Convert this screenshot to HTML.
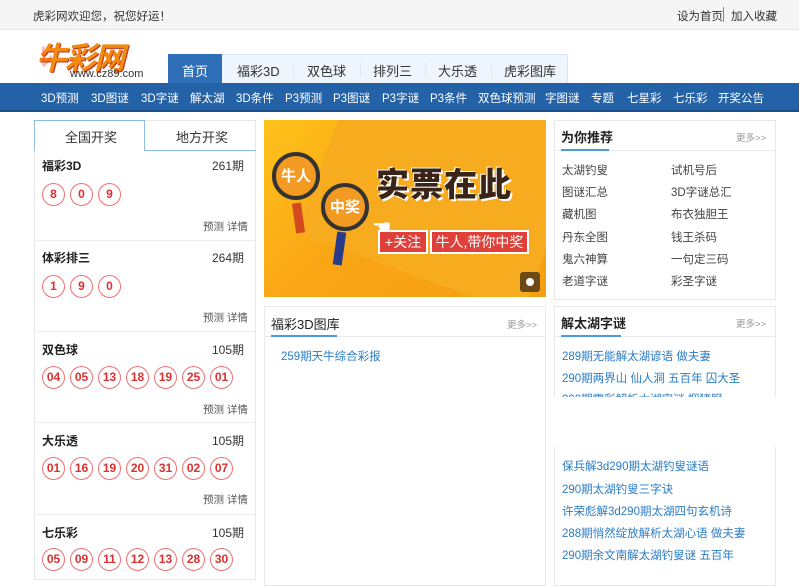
<!DOCTYPE html>
<html><head><meta charset="utf-8"><style>
*{margin:0;padding:0;box-sizing:border-box}
body{width:799px;height:569px;overflow:hidden;background:#fff;font-family:"Liberation Sans","Noto Sans CJK SC",sans-serif;font-size:12px;color:#333;position:relative}
.a{position:absolute;white-space:nowrap}
.top{position:absolute;left:0;top:0;width:799px;height:30px;background:#f5f5f5;border-bottom:1px solid #e6e6e6}
.nav{position:absolute;left:0;top:83px;width:799px;height:29px;background:#2462a8;border-bottom:2px solid #1a4f8c}
.nav span{position:absolute;top:7px;color:#fff;font-size:11.5px}
.tabs{position:absolute;left:168px;top:54px;width:400px;height:29px;background:#eef5fc;border:1px solid #d6e6f6;border-bottom:none}
.tabs span{position:absolute;top:6px;font-size:13px;color:#333}
.tabs i{position:absolute;top:8px;width:1px;height:14px;background:#dde6ee}
.box{position:absolute;border:1px solid #e8e8e8;background:#fff}
.ball{position:absolute;width:23px;height:23px;border:1.5px solid #f07070;border-radius:50%;color:#d93030;font-weight:bold;font-size:12px;text-align:center;line-height:20px}
.ttl{font-weight:bold;font-size:12px;color:#222}
.sm{font-size:10.5px;color:#555}
.lnk{color:#2a7cc6;font-size:11.5px}
.it{color:#444;font-size:11.5px}
.sep{position:absolute;left:34px;width:222px;height:1px;background:#ececec}
</style></head><body>
<div class="top"></div>
<div class="a" style="left:33px;top:8px;font-size:11.5px;color:#333">虎彩网欢迎您，祝您好运！</div>
<div class="a" style="left:677px;top:8px;font-size:11.5px;color:#333">设为首页</div>
<div class="a" style="left:723px;top:7px;width:1px;height:15px;background:#888"></div>
<div class="a" style="left:731px;top:8px;font-size:11.5px;color:#333">加入收藏</div>

<!-- logo -->
<div class="a" style="left:36px;top:33px;font-size:31px;font-weight:bold;font-style:italic;color:#f08a10;letter-spacing:-2px;text-shadow:1px 1px 0 #c03020">牛彩网</div>
<div class="a" style="left:40px;top:37px;font-size:26px;font-weight:bold;color:#e8452a;opacity:.35">ﾚ</div>
<div class="a" style="left:70px;top:68px;font-size:11px;color:#333">www.cz89.com</div>

<div class="tabs">
<div class="a" style="left:-1px;top:-1px;width:54px;height:30px;background:#2f6fb8"></div>
<span style="left:13px;color:#fff">首页</span>
<span style="left:68px">福彩3D</span><i style="left:124px"></i>
<span style="left:138px">双色球</span><i style="left:191px"></i>
<span style="left:204px">排列三</span><i style="left:256px"></i>
<span style="left:269px">大乐透</span><i style="left:322px"></i>
<span style="left:335px">虎彩图库</span>
</div>

<div class="nav">
<span style="left:41px">3D预测</span><span style="left:91px">3D图谜</span><span style="left:141px">3D字谜</span><span style="left:190px">解太湖</span><span style="left:236px">3D条件</span><span style="left:285px">P3预测</span><span style="left:333px">P3图谜</span><span style="left:382px">P3字谜</span><span style="left:430px">P3条件</span><span style="left:478px">双色球预测</span><span style="left:545px">字图谜</span><span style="left:591px">专题</span><span style="left:627px">七星彩</span><span style="left:673px">七乐彩</span><span style="left:718px">开奖公告</span>
</div>

<!-- left column -->
<div class="box" style="left:34px;top:120px;width:222px;height:460px"></div>
<div class="a" style="left:34px;top:120px;width:111px;height:31px;border:1px solid #8dbbe6;border-bottom:none;background:#fff"></div>
<div class="a" style="left:145px;top:150px;width:111px;height:1px;background:#8dbbe6"></div>
<div class="a" style="left:145px;top:120px;width:111px;height:30px;border-top:1px solid #e8e8e8"></div>
<div class="a" style="left:65px;top:127px;font-size:13px">全国开奖</div>
<div class="a" style="left:176px;top:127px;font-size:13px">地方开奖</div>

<div class="a ttl" style="left:42px;top:157px">福彩3D</div><div class="a" style="left:212px;top:157px">261期</div>
<div class="ball" style="left:42px;top:183px">8</div><div class="ball" style="left:70px;top:183px">0</div><div class="ball" style="left:98px;top:183px">9</div>
<div class="a sm" style="left:203px;top:219px">预测 详情</div>
<div class="sep" style="top:240px"></div>

<div class="a ttl" style="left:42px;top:249px">体彩排三</div><div class="a" style="left:212px;top:249px">264期</div>
<div class="ball" style="left:42px;top:275px">1</div><div class="ball" style="left:70px;top:275px">9</div><div class="ball" style="left:98px;top:275px">0</div>
<div class="a sm" style="left:203px;top:310px">预测 详情</div>
<div class="sep" style="top:331px"></div>

<div class="a ttl" style="left:42px;top:341px">双色球</div><div class="a" style="left:212px;top:341px">105期</div>
<div class="ball" style="left:42px;top:366px">04</div><div class="ball" style="left:70px;top:366px">05</div><div class="ball" style="left:98px;top:366px">13</div><div class="ball" style="left:126px;top:366px">18</div><div class="ball" style="left:154px;top:366px">19</div><div class="ball" style="left:182px;top:366px">25</div><div class="ball" style="left:210px;top:366px">01</div>
<div class="a sm" style="left:203px;top:402px">预测 详情</div>
<div class="sep" style="top:422px"></div>

<div class="a ttl" style="left:42px;top:432px">大乐透</div><div class="a" style="left:212px;top:432px">105期</div>
<div class="ball" style="left:42px;top:457px">01</div><div class="ball" style="left:70px;top:457px">16</div><div class="ball" style="left:98px;top:457px">19</div><div class="ball" style="left:126px;top:457px">20</div><div class="ball" style="left:154px;top:457px">31</div><div class="ball" style="left:182px;top:457px">02</div><div class="ball" style="left:210px;top:457px">07</div>
<div class="a sm" style="left:203px;top:492px">预测 详情</div>
<div class="sep" style="top:514px"></div>

<div class="a ttl" style="left:42px;top:524px">七乐彩</div><div class="a" style="left:212px;top:524px">105期</div>
<div class="ball" style="left:42px;top:548px">05</div><div class="ball" style="left:70px;top:548px">09</div><div class="ball" style="left:98px;top:548px">11</div><div class="ball" style="left:126px;top:548px">12</div><div class="ball" style="left:154px;top:548px">13</div><div class="ball" style="left:182px;top:548px">28</div><div class="ball" style="left:210px;top:548px">30</div>

<!-- banner -->
<div class="a" style="left:264px;top:120px;width:282px;height:177px;background:linear-gradient(135deg,#ffc21a 0%,#f9a515 45%,#f5a012 100%);overflow:hidden">
<div class="a" style="left:60px;top:-40px;width:240px;height:200px;background:#f7ab1e;transform:rotate(20deg)"></div>
<div class="a" style="left:8px;top:32px;width:48px;height:48px;border-radius:50%;border:4px solid #333;background:#f39a22"></div>
<div class="a" style="left:17px;top:45px;color:#fff;font-weight:bold;font-size:15px">牛人</div>
<div class="a" style="left:30px;top:83px;width:9px;height:30px;background:#d34a20;transform:rotate(-8deg)"></div>
<div class="a" style="left:57px;top:63px;width:48px;height:48px;border-radius:50%;border:4px solid #333;background:#f39a22"></div>
<div class="a" style="left:66px;top:76px;color:#fff;font-weight:bold;font-size:15px">中奖</div>
<div class="a" style="left:71px;top:112px;width:9px;height:33px;background:#2a3a8a;transform:rotate(8deg)"></div>
<div class="a" style="left:108px;top:95px;font-size:22px;color:#fff">☚</div>
<div class="a" style="left:112px;top:38px;font-size:33px;font-weight:900;color:#3a2418;letter-spacing:1px;text-shadow:2px 2px 0 #fff,-1px -1px 0 #fff">实票在此</div>
<div class="a" style="left:114px;top:110px;width:50px;height:24px;background:#e0403a;border:2px solid #fff;color:#fff;font-size:14px;line-height:20px;text-align:center">+关注</div>
<div class="a" style="left:166px;top:110px;width:99px;height:24px;background:#e0403a;border:2px solid #fff;color:#fff;font-size:14px;line-height:20px;text-align:center">牛人,带你中奖</div>
<div class="a" style="left:256px;top:152px;width:20px;height:20px;background:#6b4a18;border-radius:3px"></div>
<div class="a" style="left:262px;top:158px;width:8px;height:8px;background:#fff;border-radius:50%"></div>
</div>

<!-- middle box -->
<div class="box" style="left:264px;top:306px;width:282px;height:280px"></div>
<div class="a" style="left:264px;top:336px;width:282px;height:1px;background:#eaeaea"></div>
<div class="a" style="left:271px;top:314px;font-size:13px;color:#222">福彩3D图库</div>
<div class="a" style="left:271px;top:335px;width:66px;height:2px;background:#4a9be0"></div>
<div class="a" style="left:507px;top:317px;font-size:9.5px;color:#999">更多&gt;&gt;</div>
<div class="a lnk" style="left:281px;top:348px">259期天牛综合彩报</div>

<!-- right box 1 -->
<div class="box" style="left:554px;top:120px;width:222px;height:180px"></div>
<div class="a" style="left:554px;top:150px;width:222px;height:1px;background:#eaeaea"></div>
<div class="a" style="left:561px;top:127px;font-size:13px;font-weight:bold;color:#222">为你推荐</div>
<div class="a" style="left:561px;top:149px;width:48px;height:2px;background:#4a9be0"></div>
<div class="a" style="left:736px;top:130px;font-size:9.5px;color:#999">更多&gt;&gt;</div>
<div class="a it" style="left:562px;top:162px">太湖钓叟</div><div class="a it" style="left:671px;top:162px">试机号后</div>
<div class="a it" style="left:562px;top:184px">图谜汇总</div><div class="a it" style="left:671px;top:184px">3D字谜总汇</div>
<div class="a it" style="left:562px;top:206px">藏机图</div><div class="a it" style="left:671px;top:206px">布衣独胆王</div>
<div class="a it" style="left:562px;top:229px">丹东全图</div><div class="a it" style="left:671px;top:229px">钱王杀码</div>
<div class="a it" style="left:562px;top:251px">鬼六神算</div><div class="a it" style="left:671px;top:251px">一句定三码</div>
<div class="a it" style="left:562px;top:273px">老道字谜</div><div class="a it" style="left:671px;top:273px">彩圣字谜</div>

<!-- right box 2 -->
<div class="box" style="left:554px;top:306px;width:222px;height:280px"></div>
<div class="a" style="left:554px;top:336px;width:222px;height:1px;background:#eaeaea"></div>
<div class="a" style="left:561px;top:313px;font-size:13px;font-weight:bold;color:#222">解太湖字谜</div>
<div class="a" style="left:561px;top:335px;width:60px;height:2px;background:#4a9be0"></div>
<div class="a" style="left:736px;top:316px;font-size:9.5px;color:#999">更多&gt;&gt;</div>
<div class="a lnk" style="left:562px;top:348px">289期无能解太湖谚语 做夫妻</div>
<div class="a lnk" style="left:562px;top:370px">290期两界山 仙人洞 五百年 囚大圣</div>
<div class="a lnk" style="left:562px;top:391px">290期震彩解析太湖字谜 捆猪服</div>
<div class="a" style="left:546px;top:397px;width:253px;height:50px;background:#fff"></div>
<div class="a lnk" style="left:562px;top:458px">保兵解3d290期太湖钓叟谜语</div>
<div class="a lnk" style="left:562px;top:481px">290期太湖钓叟三字诀</div>
<div class="a lnk" style="left:562px;top:503px">许荣彪解3d290期太湖四句玄机诗</div>
<div class="a lnk" style="left:562px;top:525px">288期悄然绽放解析太湖心语 做夫妻</div>
<div class="a lnk" style="left:562px;top:547px">290期余文南解太湖钓叟谜 五百年</div>
</body></html>
